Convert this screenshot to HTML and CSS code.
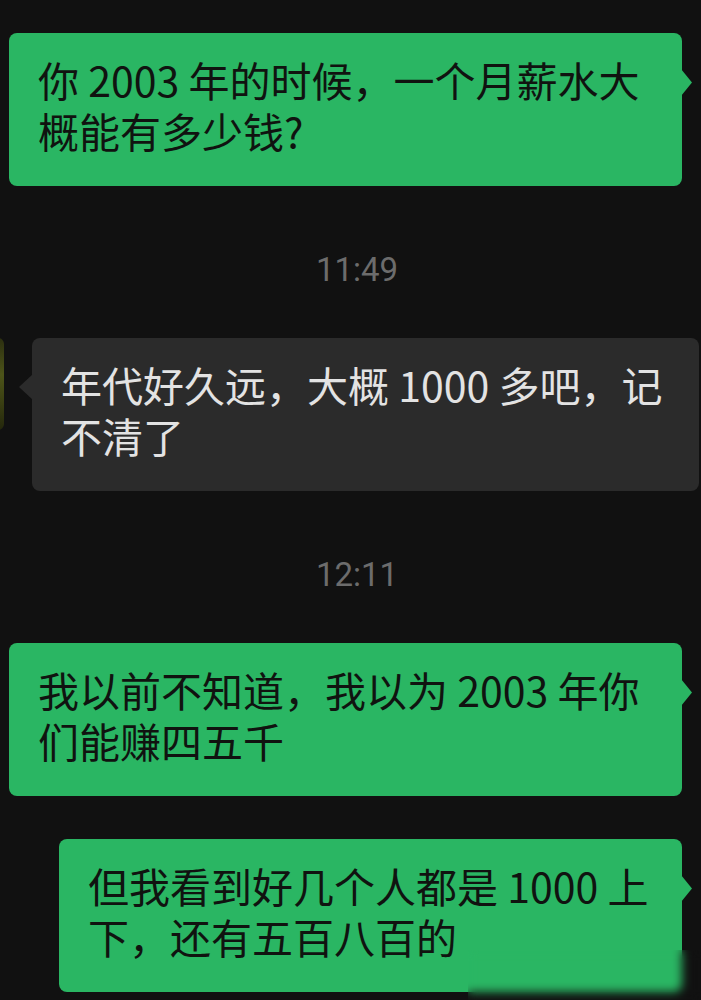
FILE: index.html
```html
<!DOCTYPE html>
<html lang="zh-CN">
<head>
  <meta charset="UTF-8" />
  <meta name="viewport" content="width=device-width, initial-scale=1.0" />
  <title>聊天记录</title>
  <link rel="stylesheet" href="styles.css">
</head>
<body>
  <!-- Chat conversation -->
  <div class="chat">
    <div class="row sent">
      <div class="bubble green">你 2003 年的时候，一个月薪水大概能有多少钱?</div>
    </div>

    <div class="time">11:49</div>

    <div class="row received">
      <div class="avatar"></div>
      <div class="bubble gray">年代好久远，大概 1000 多吧，记不清了</div>
    </div>

    <div class="time">12:11</div>

    <div class="row sent">
      <div class="bubble green">我以前不知道，我以为 2003 年你们能赚四五千</div>
    </div>

    <div class="row sent next">
      <div class="bubble green narrow">但我看到好几个人都是 1000 上下，还有五百八百的</div>
    </div>
  </div>

  <!-- Blurred watermark corner -->
  <div class="watermark"></div>
</body>
</html>
```

FILE: styles.css
```css
body {
  margin: 0;
  background-color: #111111;
  font-family: "Noto Sans CJK SC", sans-serif;
  width: 701px;
  height: 1000px;
  overflow: hidden;
  position: relative;
}
.chat {
  display: flex;
  flex-direction: column;
  padding-top: 33px;
}
.row {
  display: flex;
  align-items: flex-start;
}
.row.sent {
  justify-content: flex-end;
  padding-right: 19px;
}
.row.next {
  margin-top: 43px;
}
.row.received {
  gap: 28px;
  margin-left: -88px;
}
.avatar {
  width: 92px;
  height: 92px;
  flex-shrink: 0;
  border-radius: 6px;
  background: linear-gradient(180deg, #2c2f10 0%, #4d5419 40%, #3a3f12 70%, #24270c 100%);
}
.bubble {
  position: relative;
  font-size: 41px;
  line-height: 51px;
  padding: 21px 30px 30px 29px;
  border-radius: 8px;
}
.green {
  max-width: 614px;
  background-color: #2ab663;
  color: #101310;
}
.green.narrow {
  max-width: 564px;
}
.gray {
  max-width: 608px;
  background-color: #2b2b2b;
  color: #e3e3e3;
}
.green::after,
.gray::after {
  content: "";
  position: absolute;
  top: 36px;
  width: 11px;
  height: 27px;
  background: inherit;
}
.green::after {
  right: -10px;
  clip-path: polygon(0 0, 100% 50%, 0 100%);
}
.gray::after {
  left: -13px;
  width: 14px;
  height: 26px;
  clip-path: polygon(100% 0, 0 50%, 100% 100%);
}
.time {
  text-align: center;
  font-family: Roboto, "Liberation Sans", sans-serif;
  font-size: 33px;
  line-height: 36px;
  color: #6c6c6c;
  margin: 66px 0 50px;
  padding-left: 13px;
}
.watermark {
  position: absolute;
  left: 468px;
  top: 950px;
  width: 233px;
  height: 50px;
  backdrop-filter: blur(5px);
}
```
